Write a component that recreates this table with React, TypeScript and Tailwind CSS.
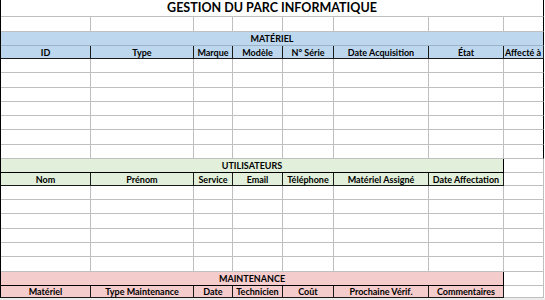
import React from "react";

const font = { fontFamily: "Lato, 'Liberation Sans', sans-serif" };

const GRID = "grid grid-cols-[90px_103px_39px_50px_51px_95px_75px_40px]";

const materielCols = ["ID", "Type", "Marque", "Modèle", "N° Série", "Date Acquisition", "État", "Affecté à"];
const userCols = ["Nom", "Prénom", "Service", "Email", "Téléphone", "Matériel Assigné", "Date Affectation"];
const maintCols = ["Matériel", "Type Maintenance", "Date", "Technicien", "Coût", "Prochaine Vérif.", "Commentaires"];

const heightClass: Record<number, string> = {
  12: "h-[12px]",
  13: "h-[13px]",
  14: "h-[14px]",
  15: "h-[15px]",
};

// plain sheet row: 8 empty cells with light gridlines
function EmptyRow({ h, edge = "border-r-[#bfbfbf]" }: { h: number; edge?: string }) {
  return (
    <div className={`${GRID} ${heightClass[h]}`}>
      {Array.from({ length: 8 }).map((_, i) => (
        <div
          key={i}
          className={`border-b border-r border-[#bfbfbf] ${i === 7 ? edge : ""}`}
        />
      ))}
    </div>
  );
}

function HeaderRow({
  labels,
  h,
  bg,
  full,
}: {
  labels: string[];
  h: number;
  bg: string;
  full?: boolean;
}) {
  return (
    <div className={`${GRID} ${heightClass[h]}`}>
      {labels.map((l, i) => (
        <div
          key={l}
          className={`${bg} flex items-center overflow-hidden whitespace-nowrap border-b border-r border-[#1a1a1a] text-[9px] font-bold leading-none text-black ${
            full && i === 7 ? "justify-start pl-[1px]" : "justify-center"
          }`}
        >
          {l}
        </div>
      ))}
      {!full && <div className="border-b border-r border-[#bfbfbf]" />}
    </div>
  );
}

function BandRow({
  label,
  bg,
  full,
}: {
  label: string;
  bg: string;
  full?: boolean;
}) {
  if (full) {
    return (
      <div
        className={`${bg} flex h-[14px] items-center justify-center border-b border-r border-b-[#9fb3c6] border-r-black text-[9px] font-bold leading-none text-black`}
      >
        {label}
      </div>
    );
  }
  return (
    <div className={`${GRID} h-[14px]`}>
      <div
        className={`${bg} col-span-7 flex items-center justify-center border-b border-r border-black text-[9px] font-bold leading-none text-black`}
      >
        {label}
      </div>
      <div className="border-b border-r border-[#bfbfbf]" />
    </div>
  );
}

export default function App() {
  return (
    <div className="h-[300px] w-[545px] overflow-hidden bg-white" style={font}>
      <div className="w-[544px] border-l border-black">
        {/* title */}
        <div className="flex h-[17px] items-center justify-center border-b border-r border-b-[#bfbfbf] border-r-black text-[12.5px] font-bold leading-none text-black">
          GESTION DU PARC INFORMATIQUE
        </div>
        <EmptyRow h={15} edge="border-r-black" />

        <BandRow label="MATÉRIEL" bg="bg-[#bdd7ee]" full />
        <HeaderRow labels={materielCols} h={13} bg="bg-[#bdd7ee]" full />
        {[14, 15, 14, 14, 14, 15, 14].map((h, i) => (
          <EmptyRow key={`m${i}`} h={h} edge="border-r-black" />
        ))}

        <BandRow label="UTILISATEURS" bg="bg-[#e2efda]" />
        <HeaderRow labels={userCols} h={13} bg="bg-[#e2efda]" />
        {[14, 14, 15, 14, 14, 15].map((h, i) => (
          <EmptyRow key={`u${i}`} h={h} />
        ))}

        <BandRow label="MAINTENANCE" bg="bg-[#f4cccc]" />
        <HeaderRow labels={maintCols} h={12} bg="bg-[#f4cccc]" />
      </div>
      <div className="h-[2px] bg-[#ececec]" />
    </div>
  );
}
